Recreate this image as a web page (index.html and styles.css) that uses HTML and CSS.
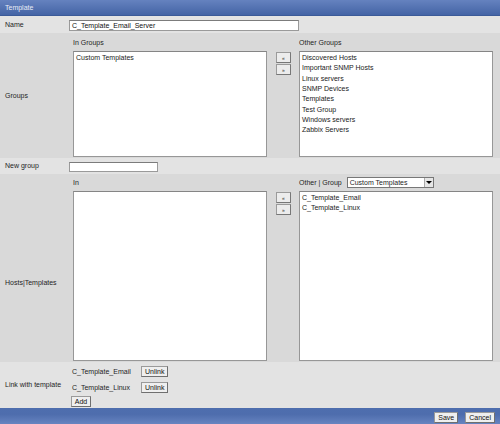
FILE: index.html
```html
<!DOCTYPE html>
<html>
<head>
<meta charset="utf-8">
<link rel="stylesheet" href="styles.css">
</head>
<body>
<div class="page">
  <div class="bar header">Template</div>

  <div class="row light name-row">
    <div class="label">Name</div>
    <div class="content center">
      <div class="field name-field">C_Template_Email_Server</div>
    </div>
  </div>

  <div class="row dark groups-row">
    <div class="label">Groups</div>
    <div class="content">
      <div class="pick">
        <div class="col-head">In Groups</div>
        <div></div>
        <div class="col-head">Other Groups</div>
        <div class="listbox">
          <div>Custom Templates</div>
        </div>
        <div class="movers">
          <button class="mv">&laquo;</button>
          <button class="mv">&raquo;</button>
        </div>
        <div class="listbox">
          <div>Discovered Hosts</div>
          <div>Important SNMP Hosts</div>
          <div>Linux servers</div>
          <div>SNMP Devices</div>
          <div>Templates</div>
          <div>Test Group</div>
          <div>Windows servers</div>
          <div>Zabbix Servers</div>
        </div>
      </div>
    </div>
  </div>

  <div class="row light newgroup-row">
    <div class="label">New group</div>
    <div class="content center">
      <div class="field group-field"></div>
    </div>
  </div>

  <div class="row dark hosts-row">
    <div class="label top hosts-label">Hosts|Templates</div>
    <div class="content">
      <div class="pick hosts-pick">
        <div class="col-head">In</div>
        <div></div>
        <div class="col-head other-head">
          <span>Other | Group</span>
          <div class="select"><span class="sel-text">Custom Templates</span><span class="sel-arrow"></span></div>
        </div>
        <div class="listbox"></div>
        <div class="movers">
          <button class="mv">&laquo;</button>
          <button class="mv">&raquo;</button>
        </div>
        <div class="listbox">
          <div>C_Template_Email</div>
          <div>C_Template_Linux</div>
        </div>
      </div>
    </div>
  </div>

  <div class="row light link-row">
    <div class="label">Link with template</div>
    <div class="content">
      <div class="links">
        <span class="link-name">C_Template_Email</span>
        <span><button class="btn">Unlink</button></span>
        <span class="link-name">C_Template_Linux</span>
        <span><button class="btn">Unlink</button></span>
      </div>
      <button class="btn add-btn">Add</button>
    </div>
  </div>

  <div class="bar footer">
    <button class="btn">Save</button>
    <button class="btn">Cancel</button>
  </div>
</div>
</body>
</html>
```

FILE: styles.css
```css
html, body {
  margin: 0;
  padding: 0;
  background: #e3e3e3;
}

body {
  font-family: "Liberation Sans", Arial, sans-serif;
  font-size: 7px;
  color: #1e1e1e;
}

.page {
  width: 500px;
  height: 424px;
  display: flex;
  flex-direction: column;
  overflow: hidden;
}

.bar {
  height: 16px;
  flex: none;
  background: linear-gradient(#6582bf, #4464a5);
  box-sizing: border-box;
}

.header {
  color: #e8ecf6;
  line-height: 16px;
  padding-left: 5px;
  border-bottom: 1px solid #3b5a98;
}

.footer {
  display: flex;
  justify-content: flex-end;
  align-items: center;
  gap: 7px;
  padding: 2px 5px 0 0;
  background: linear-gradient(#4e6eae, #4e6dad 40%, #6784c0);
}

.row {
  display: flex;
  flex: none;
}

.light { background: #e3e3e3; }
.dark { background: #d9d9d9; }

.label {
  width: 69px;
  flex: none;
  box-sizing: border-box;
  padding-left: 5px;
  display: flex;
  align-items: center;
  line-height: 10px;
}

.label.top {
  align-items: flex-start;
}

.content {
  flex: 1;
  box-sizing: border-box;
}

.content.center {
  display: flex;
  align-items: center;
}

.name-row { height: 17px; }
.groups-row { height: 125px; }
.newgroup-row { height: 16px; }
.hosts-row { height: 188px; }
.link-row { height: 46px; }

.field {
  box-sizing: border-box;
  height: 10px;
  margin: 1px 0 0 0;
  padding: 0 2px;
  border: 1px solid #9a9a9a;
  border-top-color: #7c7c7c;
  background: #fff;
  font-size: 7px;
  line-height: 9px;
  color: #111;
  white-space: nowrap;
  overflow: hidden;
}

.name-field { width: 230px; height: 11px; }
.group-field { width: 89px; margin-top: 1px; }

.groups-row .content { padding: 4px 0 0 3px; }
.hosts-row .content { padding: 3px 0 0 3px; }

.pick {
  display: grid;
  grid-template-columns: 195px 31px 195px;
  grid-template-rows: 14px 106px;
}

.hosts-pick {
  grid-template-rows: 14px 170px;
}

.col-head {
  line-height: 12px;
  padding-left: 1px;
}

.other-head {
  display: flex;
  align-items: flex-start;
  gap: 5px;
  line-height: 10px;
}

.other-head > span { padding-top: 1px; }

.listbox {
  background: #fff;
  border: 1px solid #979797;
  border-top-color: #858585;
  box-sizing: border-box;
  padding: 1px 2px;
  margin-left: 1px;
  line-height: 10.33px;
  color: #1a1a1a;
  overflow: hidden;
}

.movers {
  display: flex;
  flex-direction: column;
  gap: 1px;
  padding: 1px 0 0 9px;
}

.mv {
  width: 15px;
  height: 11px;
  padding: 0;
  margin: 0;
  border: 1px solid #9a9a9a;
  border-right-color: #777;
  border-bottom-color: #777;
  background: #ececec;
  font-family: "Liberation Sans", Arial, sans-serif;
  font-size: 5px;
  line-height: 8px;
  color: #333;
}

.select {
  width: 87px;
  height: 11px;
  box-sizing: border-box;
  border: 1px solid #777;
  background: #fff;
  display: flex;
  align-items: center;
}

.sel-text {
  flex: 1;
  padding-left: 2px;
  line-height: 9px;
}

.sel-arrow {
  width: 9px;
  height: 9px;
  box-sizing: border-box;
  border-left: 1px solid #aaa;
  background: #e6e6e6;
  position: relative;
}

.sel-arrow::after {
  content: "";
  position: absolute;
  left: 1.5px;
  top: 3px;
  border-left: 3px solid transparent;
  border-right: 3px solid transparent;
  border-top: 3px solid #000;
}

.hosts-label { padding-top: 104px; }

.link-row .content { padding: 4px 0 0 3px; }

.links {
  display: grid;
  grid-template-columns: 69px auto;
  grid-auto-rows: 11px;
  row-gap: 5px;
  align-items: center;
  justify-items: start;
}

.link-name { line-height: 10px; }

.btn {
  height: 11px;
  padding: 0 3px;
  margin: 0;
  border: 1px solid #9a9a9a;
  border-right-color: #6f6f6f;
  border-bottom-color: #6f6f6f;
  background: #efefef;
  font-family: "Liberation Sans", Arial, sans-serif;
  font-size: 7px;
  line-height: 9px;
  color: #111;
}

.add-btn {
  margin: 3px 0 0 -1px;
  width: 20px;
  padding: 0;
}

.footer .btn {
  height: 11px;
}
```
